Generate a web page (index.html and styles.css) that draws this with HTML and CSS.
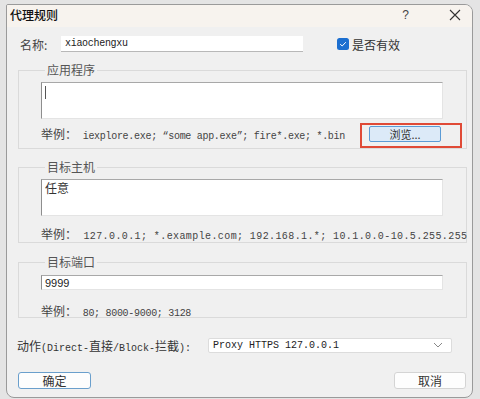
FILE: index.html
```html
<!DOCTYPE html>
<html lang="zh-CN">
<head>
    <meta charset="UTF-8">
    <title>代理规则</title>
    <link rel="stylesheet" href="styles.css">
</head>
<body>
<div class="dialog">
    <div class="titlebar">
        <span class="title">代理规则</span>
        <span class="help">?</span>
        <svg class="close" width="12" height="12" viewBox="0 0 12 12">
            <path d="M1 1 L11 11 M11 1 L1 11" stroke="#333" stroke-width="1.1" fill="none"/>
        </svg>
    </div>

    <div class="content">
        <div class="name-row">
            <label class="name-label">名称:</label>
            <div class="name-input">xiaochengxu</div>
            <span class="check">
                <svg width="12" height="12" viewBox="0 0 12 12">
                    <rect x="0" y="0" width="12" height="12" rx="2.5" fill="#1c6fd0"/>
                    <path d="M3.2 6.2 L5.2 8 L8.8 4.2" stroke="#fff" stroke-width="1" fill="none"/>
                </svg>
            </span>
            <span class="check-label">是否有效</span>
        </div>

        <fieldset class="group">
            <legend>应用程序</legend>
            <div class="textbox tall"><span class="caret"></span></div>
            <div class="example-row">
                <span class="example">举例：<span class="latin"> iexplore.exe; “some app.exe”; fire*.exe; *.bin</span></span>
                <span class="highlight"><button class="browse">浏览...</button></span>
            </div>
        </fieldset>

        <fieldset class="group">
            <legend>目标主机</legend>
            <div class="textbox tall">任意</div>
            <div class="example-row host">
                <span class="example">举例：<span class="latin wide"> 127.0.0.1; *.example.com; 192.168.1.*; 10.1.0.0-10.5.255.255</span></span>
            </div>
        </fieldset>

        <fieldset class="group port-group">
            <legend>目标端口</legend>
            <div class="textbox short">9999</div>
            <div class="example-row port">
                <span class="example">举例：<span class="latin"> 80; 8000-9000; 3128</span></span>
            </div>
        </fieldset>

        <div class="action-row">
            <span class="action-label">动作<span class="latin">(Direct-</span>直接<span class="latin">/Block-</span>拦截<span class="latin">):</span></span>
            <div class="select">
                <span>Proxy HTTPS 127.0.0.1</span>
                <svg width="10" height="6" viewBox="0 0 10 6">
                    <path d="M1 1 L5 5 L9 1" stroke="#888" stroke-width="1" fill="none"/>
                </svg>
            </div>
        </div>

        <div class="buttons">
            <button class="btn ok">确定</button>
            <button class="btn cancel">取消</button>
        </div>
    </div>
</div>
</body>
</html>
```

FILE: styles.css
```css
body {
    margin: 0;
    padding: 4px 7px 0 6px;
    background: #e4e4e4;
    font-family: "Noto Sans CJK SC", sans-serif;
    font-size: 12px;
    color: #333;
}

.dialog {
    width: 467px;
    height: 394px;
    box-sizing: border-box;
    border: 1px solid #9a9a9a;
    border-radius: 2px 8px 8px 8px;
    background: #f0f0f0;
    overflow: hidden;
}

.titlebar {
    height: 22px;
    box-sizing: border-box;
    padding: 0 0 3px 3px;
    display: flex;
    align-items: center;
    background: #f7f3ee;
}

.title {
    font-size: 12px;
    font-weight: 500;
    color: #111;
    flex: 1;
}

.help {
    font-family: "Liberation Sans", sans-serif;
    font-size: 12px;
    color: #444;
    margin-right: 40px;
}

.close {
    margin-right: 11px;
}

.content {
    padding: 0 5px 0 11px;
}

.latin {
    font-family: "Liberation Mono", monospace;
    font-size: 10px;
}

.name-row {
    margin-top: 9px;
    height: 16px;
    display: flex;
    align-items: center;
}

.name-label {
    width: 43px;
    padding-left: 2px;
    box-sizing: border-box;
    color: #444;
}

.name-input {
    width: 242px;
    height: 16px;
    box-sizing: border-box;
    background: #fff;
    border-bottom: 1px solid #b8b8b8;
    font-family: "Liberation Mono", monospace;
    font-size: 10px;
    letter-spacing: -0.3px;
    line-height: 15px;
    padding-left: 4px;
    color: #222;
}

.check {
    margin-left: 34px;
    display: flex;
}

.check-label {
    margin-left: 3px;
    color: #333;
}

.group {
    margin: 11px 0 0 0;
    padding: 5px 0 0 22px;
    border: 1px solid #dadada;
    min-width: 0;
}

.group.port-group {
    margin-top: 12px;
    padding-top: 6px;
}

.group legend {
    padding: 0 2px;
    margin-left: 4px;
    line-height: 14px;
    color: #555;
}

.textbox {
    width: 402px;
    box-sizing: border-box;
    background: #fff;
    border: 1px solid #e4e4e4;
    border-top-color: #a8a8a8;
    border-left-color: #8e8e8e;
    padding: 1px 3px;
    color: #333;
    line-height: 14px;
}

.textbox.tall {
    height: 37px;
}

.textbox.short {
    height: 15px;
    padding-top: 0;
    font-family: "Liberation Sans", sans-serif;
    font-size: 11px;
    color: #222;
}

.caret {
    display: block;
    width: 1px;
    height: 13px;
    margin-top: 2px;
    background: #555;
}

.example-row {
    display: flex;
    align-items: center;
    height: 17px;
    margin-top: 6px;
    padding-bottom: 6px;
}

.example-row.host {
    margin-top: 9px;
    padding-bottom: 0;
}

.example-row.port {
    height: 14px;
    margin-top: 13px;
    padding-bottom: 0;
}

.example {
    color: #444;
    white-space: nowrap;
}

.example .latin {
    letter-spacing: -0.3px;
}

.example .latin.wide {
    letter-spacing: 0.4px;
}

.highlight {
    position: relative;
    margin-left: auto;
    margin-right: 25px;
}

.highlight::after {
    content: "";
    position: absolute;
    left: -9px;
    top: -3px;
    width: 102px;
    height: 25px;
    box-sizing: border-box;
    border: 2px solid #e04a36;
}

.browse {
    display: block;
    width: 72px;
    height: 16px;
    padding: 0;
    background: #dceaf8;
    border: 1px solid #5b9bd5;
    border-radius: 2px;
    font-family: "Noto Sans CJK SC", sans-serif;
    font-size: 11px;
    line-height: 14px;
    color: #333;
}

.action-row {
    display: flex;
    align-items: center;
    margin-top: 19px;
    margin-left: -1px;
    height: 16px;
}

.action-label {
    width: 191px;
    white-space: nowrap;
    color: #333;
}

.select {
    width: 244px;
    height: 15px;
    box-sizing: border-box;
    display: flex;
    align-items: center;
    justify-content: space-between;
    background: #fff;
    border: 1px solid #dcdcdc;
    border-radius: 2px;
    padding: 0 8px 0 4px;
    font-family: "Liberation Mono", monospace;
    font-size: 10px;
    color: #222;
}

.buttons {
    display: flex;
    justify-content: space-between;
    margin-top: 19px;
    margin-right: 1px;
}

.btn {
    height: 17px;
    padding: 0;
    font-family: "Noto Sans CJK SC", sans-serif;
    font-size: 12px;
    line-height: 15px;
    color: #333;
    background: #fdfdfd;
    border-radius: 3px;
}

.btn.ok {
    width: 73px;
    border: 1px solid #6a9fcc;
}

.btn.cancel {
    width: 72px;
    border: 1px solid #d4d4d4;
}
```
